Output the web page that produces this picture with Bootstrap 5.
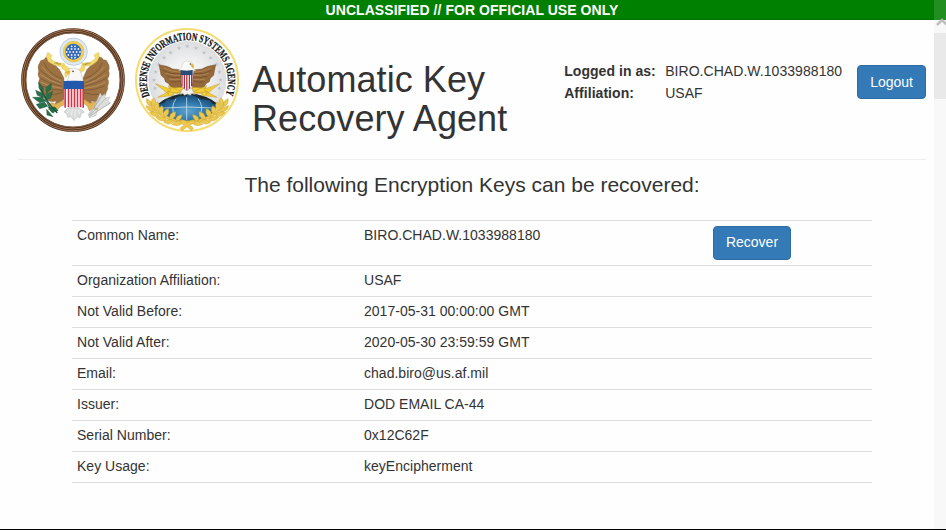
<!DOCTYPE html>
<html lang="en">
<head>
<meta charset="utf-8">
<meta name="viewport" content="width=device-width, initial-scale=1">
<title>Automatic Key Recovery Agent</title>
<link href="https://cdn.jsdelivr.net/npm/bootstrap@5.3.0/dist/css/bootstrap.min.css" rel="stylesheet">
<style>
body{font-family:"Liberation Sans",Arial,sans-serif;font-size:14px;line-height:20px;color:#333;background:#fefefe;height:530px;overflow:hidden;border-bottom:1px solid #000}
.banner{height:20px;background:#008000;border-bottom:1px solid #007000;padding-right:2px;letter-spacing:.05px}
.site-head{height:140px;margin-left:18px;margin-right:20px;border-bottom:1px solid #eee}
.seals{margin-left:-2px}
.seals svg{width:114px;height:116px;display:block}
.site-title{font-size:36px;line-height:39px;letter-spacing:.08px;font-weight:400;margin:40px 0 0 8px;width:270px}
.who{margin-top:40px;line-height:22px;letter-spacing:.05px;display:grid;grid-template-columns:101px 177px}
.btn-main{--bs-btn-color:#fff;--bs-btn-bg:#337ab7;--bs-btn-border-color:#2e6da4;--bs-btn-hover-color:#fff;--bs-btn-hover-bg:#286090;--bs-btn-hover-border-color:#204d74;--bs-btn-font-size:14px;--bs-btn-line-height:20px;--bs-btn-border-radius:4px}
.logout{margin:45px 0 0 15px}
.recover{width:78px;padding:5px 0 7px;letter-spacing:0}
.lead-line{font-size:21px;line-height:24px;font-weight:400;margin:13px 2px 23px 0}
.keys{width:800px;margin-left:72px;table-layout:fixed;letter-spacing:.02px;--bs-table-bg:transparent;--bs-table-color:#333;border-color:#ddd;border-bottom:1px solid #ddd}
.keys td{padding:4px 5px 6px;border-width:1px 0 0;vertical-align:top}
.keys td:last-child{padding:5px}
.c1{width:287px}.c2{width:349px}
.scroller{top:0;right:0;width:12px;height:529px;background:linear-gradient(#208e20 0 20px,#f8f8f8 20px)}
.scroller svg{display:block;margin:17px 0 0 2px}
.thumb{height:66px;margin-top:6px;background:#e9e9e9}
</style>
</head>
<body class="position-relative">
<div class="banner text-center text-white fw-bold">UNCLASSIFIED // FOR OFFICIAL USE ONLY</div>
<header class="site-head d-flex align-items-start">
  <div class="seals d-flex">
    <svg viewBox="0 0 342 348" role="img" aria-label="Great Seal of the United States">
      <circle cx="171" cy="180" r="148" fill="#fff" stroke="#4a3021" stroke-width="15"/>
      <circle cx="171" cy="180" r="152.500" fill="none" stroke="#ad7c55" stroke-width="3"/>
      <circle cx="171" cy="180" r="147" fill="none" stroke="#ad7c55" stroke-width="2.500"/>
      <circle cx="171" cy="180" r="141.500" fill="none" stroke="#8d6346" stroke-width="3"/>
      <circle cx="173" cy="95" r="41" fill="#dfe9f3" stroke="#a9bbd0" stroke-width="2"/>
      <circle cx="173" cy="95" r="31" fill="#f1cf4c" stroke="#e0bb3e" stroke-width="2"/>
      <circle cx="172" cy="95" r="24" fill="#3569b9"/>
      <g stroke="#e8f0fb" stroke-width="5.500" stroke-linecap="round" stroke-dasharray="0 10">
        <path d="M167 79h12M157 87h32M152 96h42M157 105h32M167 113h12"/>
      </g>
      <path fill="#9d7344" stroke="#8a6238" stroke-width="1" d="M98 111q10 7 14 19l19 19 13 25v64q-15 13-27 14l4-9q-12 5-21 0-12-1-16-11-9-6-9-16-7-8-4-18-6-12 0-22-8-12-3-23-5-15 3-25 2-10 13-9 3-10 14-8zM245 111q-10 7-14 19l-18 18-12 26v64q15 14 28 14l-4-9q12 5 21 0 12-1 16-11 9-6 9-16 7-8 4-18 6-12 0-22 8-12 3-23 5-15-3-25-2-10-13-9-3-10-14-8z"/>
      <path fill="none" stroke="#75502d" stroke-width="2" d="M84 128q14 35 54 48M72 150q30 29 64 40M72 175q34 18 66 24M76 198q32 13 64 13M84 222q30 6 56-4M259 128q-14 35-54 48M271 150q-30 29-64 40M271 175q-34 18-66 24M267 198q-32 13-64 13M259 222q-30 6-56-4"/>
      <path fill="none" stroke="#c09866" stroke-width="2" d="M78 140q22 30 58 43M72 163q30 22 64 30M74 187q34 16 64 18M265 140q-22 30-58 43M271 163q-30 22-64 30M269 187q-34 16-64 18"/>
      <g fill="#f3dc6c" stroke="#d3b548" stroke-width="1.200">
        <path d="M95 97l12 8-3 12 13 9 29 5-4 10-28-6-17-10-6-15zM248 97l-14 8 5 10-14 11-28 4 2 10 28-4 16-12 7-14z"/>
        <path d="M145 134q-12 7-6 12t12 8q-9 14-1 18l9-10q-4-7 4-15zM199 134q14 10 4 19-14 4-11 18l-8-12q-3-11 9-13z"/>
      </g>
      <path d="M116 128l19 5M203 134l20-5" stroke="#8a7a38" stroke-width="5" stroke-dasharray="2 2"/>
      <path fill="#f7f7f5" stroke="#b9bbb8" stroke-width="1.500" d="M153 184q6-14 7-23l-5-5q3-12 18-12 19 0 23 18l6 22z"/>
      <path fill="#e8b83c" d="M164 152l-14 0-5 8 15 2z"/><circle cx="171" cy="154" r="2.500" fill="#443a2c"/>
      <path fill="#e2b455" stroke="#b58c3c" stroke-width="1.500" d="M145 241l-24 12-14-5-12 6 10 7-8 9 16-1 7 7 10-14 20-11zM204 238l18 12 15-4 12 6-9 8 8 10-18-4-10 7-5-14-13-10z"/>
      <path fill="#27714b" stroke="#1c5a3b" stroke-width="1.500" d="M68 187l14 17-1 13-12-13zM59 211l19 8 5 15-19-8zM90 203l16-13-1 17-14 14zM110 214l-7 21-17 3 6-15zM50 232l28 0 12 12-19 4zM61 253l25-6 9 12-24 7zM96 262l21-1 9 11-18 5zM92 268l19 22-18-5zM88 238l26 41-8-3z"/>
      <path d="M75 207q16 39 49 72" fill="none" stroke="#17583b" stroke-width="4"/>
      <path fill="#dededd" stroke="#b5b7b8" stroke-width="1.500" d="M249 227l4-8 5 10 8-8 2 14 13-4-6 12 9 6-15 8-26 17-10-9zM232 263l-15 19 3 12 20-8 6-22z"/>
      <path fill="none" stroke="#a9acad" stroke-width="2" d="M219 287l38-58M221 287l50-54M221 289l62-40M233 265l20-35"/>
      <path fill="#dadcdc" stroke="#b3b5b6" stroke-width="1.500" d="M157 263l-13 13 8 5 3 11 10-2 9 12 9-12 9 3 4-12 9-5-17-13z"/>
      <path stroke="#f4f4f4" stroke-width="2.500" d="M161 268l-7 12M169 268l-3 18M177 268l0 22M186 268l6 15"/>
      <path d="M145 206h58v57q-28-3-58 0z" fill="#fff"/>
      <path d="M147.500 206v57M157.500 206v56M166.500 206v56M175.500 206v56M184.500 206v56M193.500 206v56M201.500 206v57" stroke="#d92d45" stroke-width="4.800"/>
      <path d="M143 183q31-2 61 0v24h-61z" fill="#2458ad"/>
    </svg>
    <svg viewBox="0 0 342 348" role="img" aria-label="Defense Information Systems Agency">
      <defs>
        <radialGradient id="silver"><stop offset="0" stop-color="#fff"/><stop offset=".5" stop-color="#f1f1f2"/><stop offset="1" stop-color="#dcdddf"/></radialGradient>
        <radialGradient id="sea" cx=".5" cy=".6"><stop offset="0" stop-color="#5ca4cf"/><stop offset=".6" stop-color="#2f78ab"/><stop offset="1" stop-color="#1c5480"/></radialGradient>
        <path id="ring" d="M59 228A122 122 0 1 1 286 226"/>
        <path id="star" d="M0-7l1.700 4.700 5 .2-4 3 1.400 4.800-4.100-2.800-4.100 2.800 1.400-4.800-4-3 5-.2z"/>
      </defs>
      <circle cx="171" cy="180" r="153" fill="#fff" stroke="#f5db70" stroke-width="6"/>
      <circle cx="172" cy="180" r="117" fill="url(#silver)"/>
      <text font-family="Liberation Serif,serif" font-weight="700" font-size="33" fill="#111" stroke="#111" stroke-width=".8"><textPath href="#ring" textLength="472" lengthAdjust="spacingAndGlyphs">DEFENSE INFORMATION SYSTEMS AGENCY</textPath></text>
      <g fill="#bfc2c7">
        <use href="#star" x="172" y="79"/><use href="#star" x="147" y="84"/><use href="#star" x="198" y="84"/><use href="#star" x="122" y="98"/><use href="#star" x="222" y="98"/><use href="#star" x="102" y="113"/><use href="#star" x="242" y="113"/><use href="#star" x="86" y="133"/><use href="#star" x="259" y="133"/><use href="#star" x="77" y="156"/><use href="#star" x="268" y="156"/><use href="#star" x="72" y="180"/><use href="#star" x="272" y="180"/><use href="#star" x="75" y="205"/><use href="#star" x="268" y="205"/>
      </g>
      <path d="M84 253q38-32 88-32 52 0 91 32-24 55-89 55-66-1-90-55z" fill="url(#sea)" stroke="#2a4a60" stroke-width="1.500"/>
      <path fill="#1f2a30" d="M84 253q36-32 88-32l-2 8q-26-4-38 9l-20 0-10 10-10 3zM177 221q51 1 86 32l-14-1-12-12-24-2-18-9z"/>
      <path fill="none" stroke="#d7e8ee" stroke-width="2.200" d="M170 232v68M138 236q-18 24-3 54M204 236q20 24 4 54M98 264q74-6 150 0"/>
      <path fill="#94693c" stroke="#6b4a29" stroke-width="1.200" d="M87 134q26 3 41 13l24 2 6 46-4 18-14 1-8-8-11-6-5-9-10-6-3-10-10-9-2-11zM257 134q-26 3-41 13l-24 2-6 46 4 18 14 1 8-8 11-6 5-9 10-6 3-10 10-9 2-11z"/>
      <path fill="none" stroke="#c0925e" stroke-width="2" d="M101 144q24 12 52 13M108 160q22 8 44 6M118 177q18 4 36 1M243 144q-24 12-52 13M236 160q-22 8-44 6M226 177q-18 4-36 1"/>
      <path fill="none" stroke="#65441f" stroke-width="1.500" d="M98 151q26 14 54 10M112 169q20 6 42 2M122 186q18 1 32-3M246 151q-26 14-54 10M232 169q-20 6-42 2M222 186q-18 1-32-3"/>
      <g fill="#f2cd36" stroke="#b5922b" stroke-width="1.300">
        <path d="M76 191l42 15-3-9 43 19-4 7-41-9 3 9zM269 191l-42 15 3-9-43 19 4 7 41-9-3 9zM83 232l40-22-4-6 39-2-2 12-28 7 4 5zM261 232l-39-22 5-6-41-2 3 12 28 7-4 5z"/>
      </g>
      <path fill="#fbfbf8" stroke="#c5c2ba" stroke-width="1.500" d="M146 151l9-11q2-18 18-17 16 1 17 14l-1 6 8 9z"/>
      <path fill="#e6b63a" d="M184 130l8 6-2 10-8-9z"/><circle cx="181" cy="132" r="2" fill="#443a2c"/>
      <path fill="#f1f1ef" stroke="#9b9a91" stroke-width="1.500" d="M159 205l-10 17 9-3 5 7 9-4 9 4 5-7 9 4-11-18z"/>
      <path d="M153 164h34v24q-1 16-16 24-17-8-18-24z" fill="#fff" stroke="#88242f" stroke-width="1"/>
      <path d="M156 164v34M163 164v42M170.500 164v47M178 164v42M185 164v34" stroke="#a51f38" stroke-width="3.600"/>
      <path d="M152 150q18 4 36 0v15h-36z" fill="#264d77"/>
      <g fill="#ecc94c" stroke="#cda334" stroke-width="1.500">
        <g id="laurel"><path d="M56 250q34 57 118 61v-8q-80-4-112-58z"/><path d="M50 236q16 7 13 22-17-4-13-22zM71 233q13 13-1 26-13-13 1-26zM48 257q22 2 24 19-20-1-24-19zM83 245q11 17-5 27-12-14 5-27zM59 276q22-4 29 13-22 3-29-13zM96 257q11 17-5 26-14-14 5-26zM78 292q21-7 31 8-18 8-31-8zM115 266q5 21-12 25-10-17 12-25zM101 306q16-13 32-2-13 15-32 2zM137 275q0 21-17 24-6-20 17-24zM126 313q15-16 34-6-14 16-34 6zM156 284q-1 18-18 19-3-17 18-19z"/></g>
        <use href="#laurel" transform="matrix(-1 0 0 1 344 0)"/>
        <path d="M154 299q10-1 19 10 10-11 18-9l3 9-16 6 12 9-5 8-14-12-15 12-6-7 13-10-12-6z"/>
      </g>
    </svg>
  </div>
  <h1 class="site-title">Automatic Key<br>Recovery Agent</h1>
  <div class="who ms-auto">
    <strong>Logged in as:</strong><span>BIRO.CHAD.W.1033988180</span>
    <strong>Affiliation:</strong><span>USAF</span>
  </div>
  <button type="button" class="btn btn-main logout">Logout</button>
</header>
<main>
  <h3 class="lead-line text-center">The following Encryption Keys can be recovered:</h3>
  <table class="table keys mb-0">
    <colgroup><col class="c1"><col class="c2"><col></colgroup>
    <tbody>
      <tr><td>Common Name:</td><td>BIRO.CHAD.W.1033988180</td><td><button type="button" class="btn btn-main recover d-block">Recover</button></td></tr>
      <tr><td>Organization Affiliation:</td><td>USAF</td><td></td></tr>
      <tr><td>Not Valid Before:</td><td>2017-05-31 00:00:00 GMT</td><td></td></tr>
      <tr><td>Not Valid After:</td><td>2020-05-30 23:59:59 GMT</td><td></td></tr>
      <tr><td>Email:</td><td>chad.biro@us.af.mil</td><td></td></tr>
      <tr><td>Issuer:</td><td>DOD EMAIL CA-44</td><td></td></tr>
      <tr><td>Serial Number:</td><td>0x12C62F</td><td></td></tr>
      <tr><td>Key Usage:</td><td>keyEncipherment</td><td></td></tr>
    </tbody>
  </table>
</main>
<div class="scroller position-absolute overflow-hidden" aria-hidden="true">
  <svg width="10" height="10" viewBox="0 0 10 10"><path d="M1 8l5-5 5 5" fill="none" stroke="#bdbdbd" stroke-width="2.500"/></svg>
  <div class="thumb"></div>
</div>
<script src="https://cdn.jsdelivr.net/npm/bootstrap@5.3.0/dist/js/bootstrap.bundle.min.js"></script>
</body>
</html>
